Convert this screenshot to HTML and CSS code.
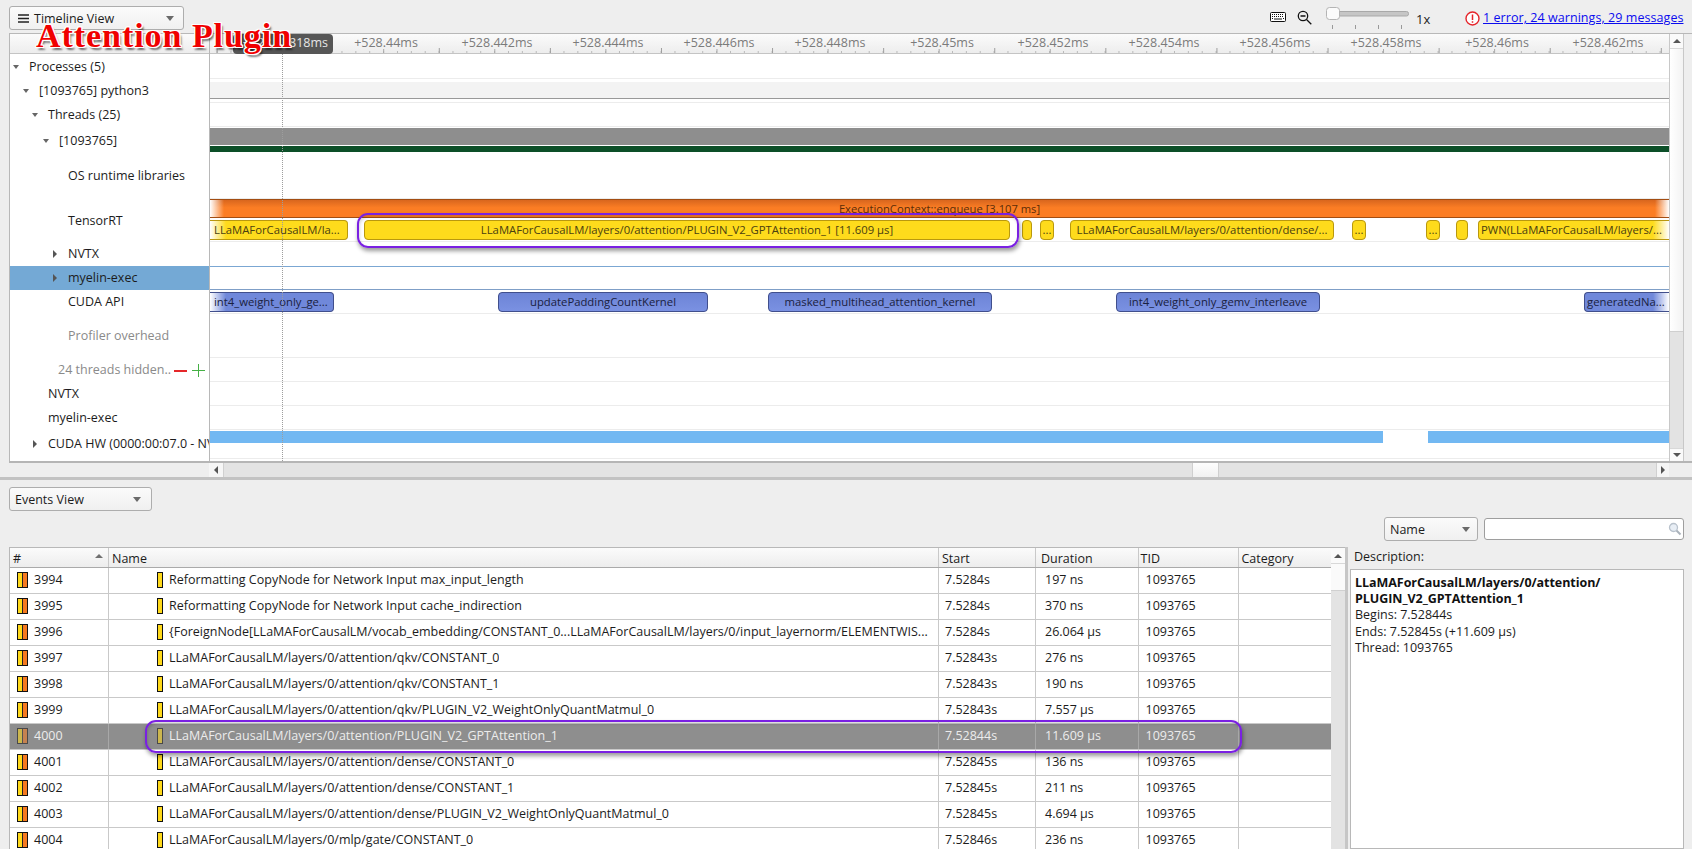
FILE: index.html
```html
<!DOCTYPE html>
<html lang="en">
<head>
<meta charset="utf-8">
<title>Timeline View</title>
<link rel="stylesheet" href="styles.css">
</head>
<body>
<div class="app">
  <header class="toolbar">
    <div class="combo combo-timeline">
      <svg class="menu-ico" width="11" height="9" viewBox="0 0 11 9"><path d="M0 1h11M0 4.500h11M0 8h11" stroke="#222" stroke-width="1.300"/></svg>
      <span class="combo-text">Timeline View</span>
      <i class="caret"></i>
    </div>
    <div class="tools">
      <svg class="ico-kbd" width="16" height="10" viewBox="0 0 16 10"><rect x=".5" y=".5" width="15" height="9" rx="1" fill="#fff" stroke="#111"/><path d="M2 2.500h12M2 4.500h12" stroke="#111" stroke-dasharray="1 1"/><path d="M2 6.500h1M4 7h8M13 6.500h1" stroke="#111"/></svg>
      <svg class="ico-zoom" width="15" height="15" viewBox="0 0 15 15"><circle cx="6" cy="6" r="4.700" fill="none" stroke="#111" stroke-width="1.300"/><path d="M3.500 6h5M9.500 9.500l4.800 4.800" stroke="#111" stroke-width="1.300"/></svg>
      <svg class="slider" width="84" height="33" viewBox="0 0 84 33"><rect x=".5" y="11.500" width="82" height="4.500" rx="2" fill="#c6c6c6" stroke="#a9a9a9"/><path d="M6.500 25v4M29.500 25v4M52.500 25v4M75.500 25v4" stroke="#999"/><rect x=".5" y="7.500" width="13" height="12" rx="3" fill="#fbfbfb" stroke="#b4b4b4"/></svg>
      <span class="speed">1x</span>
      <svg class="ico-err" width="15" height="15" viewBox="0 0 15 15"><circle cx="7.500" cy="7.500" r="6.500" fill="#fff" stroke="#e5242a" stroke-width="1.400"/><path d="M7.500 3.500v5.500M7.500 10.300v1.500" stroke="#e5242a" stroke-width="1.500"/></svg>
      <a class="msg-link" href="#">1 error, 24 warnings, 29 messages</a>
    </div>
  </header>

  <section class="timeline-panel">
    <div class="tree">
      <div class="tree-head"></div>
      <div class="tr h25 d0"><i class="tri-d"></i>Processes (5)</div>
      <div class="tr h24 d1"><i class="tri-d"></i>[1093765] python3</div>
      <div class="tr h24 d2"><i class="tri-d"></i>Threads (25)</div>
      <div class="tr h26 d3 nudge"><i class="tri-d"></i>[1093765]</div>
      <div class="tr h46 d4">OS runtime libraries</div>
      <div class="tr h43 d4">TensorRT</div>
      <div class="tr h24 d4"><i class="tri-r"></i>NVTX</div>
      <div class="tr h24 d4 selected"><i class="tri-r"></i>myelin-exec</div>
      <div class="tr h24 d4">CUDA API</div>
      <div class="tr h44 d4 muted">Profiler overhead</div>
      <div class="tr h24 d3b muted"><span class="hidden-label">24 threads hidden..</span><span class="minus"></span><span class="plus"></span></div>
      <div class="tr h24 d2">NVTX</div>
      <div class="tr h24 d2">myelin-exec</div>
      <div class="tr h28 d2"><i class="tri-r"></i>CUDA HW (0000:00:07.0 - NVIDIA)</div>
    </div>
    <div class="tracks">
      <div class="ruler">
        <span class="tick-label" style="left:176px">+528.44ms</span>
        <span class="tick-label" style="left:287px">+528.442ms</span>
        <span class="tick-label" style="left:398px">+528.444ms</span>
        <span class="tick-label" style="left:509px">+528.446ms</span>
        <span class="tick-label" style="left:620px">+528.448ms</span>
        <span class="tick-label" style="left:732px">+528.45ms</span>
        <span class="tick-label" style="left:843px">+528.452ms</span>
        <span class="tick-label" style="left:954px">+528.454ms</span>
        <span class="tick-label" style="left:1065px">+528.456ms</span>
        <span class="tick-label" style="left:1176px">+528.458ms</span>
        <span class="tick-label" style="left:1287px">+528.46ms</span>
        <span class="tick-label" style="left:1398px">+528.462ms</span>
        <span class="cursor-pill">+528.43818ms</span>
      </div>
      <div class="lane h25"></div>
      <div class="lane h24"><div class="band"></div></div>
      <div class="lane h24"></div>
      <div class="lane h26 lane-plain"><div class="gray-bar"></div><div class="green-bar"></div></div>
      <div class="lane h46"></div>
      <div class="lane h43">
        <div class="orange-bar">ExecutionContext::enqueue [3.107 ms]</div>
        <div class="bar y fade-l" style="left:0;width:138px">LLaMAForCausalLM/la...</div>
        <div class="bar y" style="left:154px;width:646px">LLaMAForCausalLM/layers/0/attention/PLUGIN_V2_GPTAttention_1 [11.609 μs]</div>
        <div class="bar y" style="left:812px;width:10px"></div>
        <div class="bar y" style="left:830px;width:14px">...</div>
        <div class="bar y" style="left:860px;width:264px">LLaMAForCausalLM/layers/0/attention/dense/...</div>
        <div class="bar y" style="left:1142px;width:14px">...</div>
        <div class="bar y" style="left:1216px;width:14px">...</div>
        <div class="bar y" style="left:1246px;width:12px"></div>
        <div class="bar y fade-r" style="left:1268px;width:191px">PWN(LLaMAForCausalLM/layers/...</div>
      </div>
      <div class="lane h24 lane-sel-top"></div>
      <div class="lane h24 lane-sel"></div>
      <div class="lane h24">
        <div class="bar b fade-l" style="left:0;width:124px">int4_weight_only_ge...</div>
        <div class="bar b" style="left:288px;width:210px">updatePaddingCountKernel</div>
        <div class="bar b" style="left:558px;width:224px">masked_multihead_attention_kernel</div>
        <div class="bar b" style="left:906px;width:204px">int4_weight_only_gemv_interleave</div>
        <div class="bar b fade-r" style="left:1374px;width:85px">generatedNa...</div>
      </div>
      <div class="lane h44"></div>
      <div class="lane h24"></div>
      <div class="lane h24"></div>
      <div class="lane h24"></div>
      <div class="lane h28"><div class="hw-bar"></div><div class="hw-gap" style="left:1173px;width:45px"></div></div>
      <div class="cursor-line"></div>
    </div>
    <div class="vscroll">
      <div class="sb-btn"><i class="arr-u"></i></div>
      <div class="sb-thumb"></div>
      <div class="sb-track"></div>
      <div class="sb-btn sb-btn-end"><i class="arr-d"></i></div>
    </div>
  </section>

  <div class="hscroll">
    <div class="hs-btn"><i class="arr-l"></i></div>
    <div class="hs-track hs-a"></div>
    <div class="hs-thumb"></div>
    <div class="hs-track"></div>
    <div class="hs-btn hs-btn-end"><i class="arr-r"></i></div>
  </div>
  <div class="splitter"></div>

  <section class="lower">
    <div class="combo combo-events"><span class="combo-text">Events View</span><i class="caret"></i></div>
    <div class="filters">
      <div class="combo combo-name"><span class="combo-text">Name</span><i class="caret"></i></div>
      <div class="search">
        <svg width="14" height="14" viewBox="0 0 14 14"><circle cx="5.500" cy="5.500" r="4" fill="#e8eef5" stroke="#b9c2cc" stroke-width="1.300"/><path d="M8.500 8.500l4 4" stroke="#aab2bb" stroke-width="2"/></svg>
      </div>
    </div>
    <div class="events">
      <div class="table">
        <div class="row head">
          <div class="c c0">#<i class="sort"></i></div><div class="c c1">Name</div><div class="c c2">Start</div><div class="c c3">Duration</div><div class="c c4">TID</div><div class="c c5">Category</div>
        </div>
        <div class="row"><div class="c c0"><i class="ico2"></i>3994</div><div class="c c1"><i class="ico1"></i><span class="nm">Reformatting CopyNode for Network Input max_input_length</span></div><div class="c c2">7.5284s</div><div class="c c3">197 ns</div><div class="c c4">1093765</div><div class="c c5"></div></div>
        <div class="row"><div class="c c0"><i class="ico2"></i>3995</div><div class="c c1"><i class="ico1"></i><span class="nm">Reformatting CopyNode for Network Input cache_indirection</span></div><div class="c c2">7.5284s</div><div class="c c3">370 ns</div><div class="c c4">1093765</div><div class="c c5"></div></div>
        <div class="row"><div class="c c0"><i class="ico2"></i>3996</div><div class="c c1"><i class="ico1"></i><span class="nm">{ForeignNode[LLaMAForCausalLM/vocab_embedding/CONSTANT_0...LLaMAForCausalLM/layers/0/input_layernorm/ELEMENTWIS...</span></div><div class="c c2">7.5284s</div><div class="c c3">26.064 μs</div><div class="c c4">1093765</div><div class="c c5"></div></div>
        <div class="row"><div class="c c0"><i class="ico2"></i>3997</div><div class="c c1"><i class="ico1"></i><span class="nm">LLaMAForCausalLM/layers/0/attention/qkv/CONSTANT_0</span></div><div class="c c2">7.52843s</div><div class="c c3">276 ns</div><div class="c c4">1093765</div><div class="c c5"></div></div>
        <div class="row"><div class="c c0"><i class="ico2"></i>3998</div><div class="c c1"><i class="ico1"></i><span class="nm">LLaMAForCausalLM/layers/0/attention/qkv/CONSTANT_1</span></div><div class="c c2">7.52843s</div><div class="c c3">190 ns</div><div class="c c4">1093765</div><div class="c c5"></div></div>
        <div class="row"><div class="c c0"><i class="ico2"></i>3999</div><div class="c c1"><i class="ico1"></i><span class="nm">LLaMAForCausalLM/layers/0/attention/qkv/PLUGIN_V2_WeightOnlyQuantMatmul_0</span></div><div class="c c2">7.52843s</div><div class="c c3">7.557 μs</div><div class="c c4">1093765</div><div class="c c5"></div></div>
        <div class="row sel"><div class="c c0"><i class="ico2"></i>4000</div><div class="c c1"><i class="ico1"></i><span class="nm">LLaMAForCausalLM/layers/0/attention/PLUGIN_V2_GPTAttention_1</span></div><div class="c c2">7.52844s</div><div class="c c3">11.609 μs</div><div class="c c4">1093765</div><div class="c c5"></div></div>
        <div class="row"><div class="c c0"><i class="ico2"></i>4001</div><div class="c c1"><i class="ico1"></i><span class="nm">LLaMAForCausalLM/layers/0/attention/dense/CONSTANT_0</span></div><div class="c c2">7.52845s</div><div class="c c3">136 ns</div><div class="c c4">1093765</div><div class="c c5"></div></div>
        <div class="row"><div class="c c0"><i class="ico2"></i>4002</div><div class="c c1"><i class="ico1"></i><span class="nm">LLaMAForCausalLM/layers/0/attention/dense/CONSTANT_1</span></div><div class="c c2">7.52845s</div><div class="c c3">211 ns</div><div class="c c4">1093765</div><div class="c c5"></div></div>
        <div class="row"><div class="c c0"><i class="ico2"></i>4003</div><div class="c c1"><i class="ico1"></i><span class="nm">LLaMAForCausalLM/layers/0/attention/dense/PLUGIN_V2_WeightOnlyQuantMatmul_0</span></div><div class="c c2">7.52845s</div><div class="c c3">4.694 μs</div><div class="c c4">1093765</div><div class="c c5"></div></div>
        <div class="row"><div class="c c0"><i class="ico2"></i>4004</div><div class="c c1"><i class="ico1"></i><span class="nm">LLaMAForCausalLM/layers/0/mlp/gate/CONSTANT_0</span></div><div class="c c2">7.52846s</div><div class="c c3">236 ns</div><div class="c c4">1093765</div><div class="c c5"></div></div>
      </div>
      <div class="table-scroll">
        <div class="sb-btn sb-btn-t"><i class="arr-u"></i></div>
        <div class="sb-thumb-t"></div>
        <div class="sb-track"></div>
      </div>
      <div class="side">
        <div class="desc-label">Description:</div>
        <div class="desc">
          <b>LLaMAForCausalLM/layers/0/attention/<br>PLUGIN_V2_GPTAttention_1</b><br>
          Begins: 7.52844s<br>
          Ends: 7.52845s (+11.609 μs)<br>
          Thread: 1093765
        </div>
      </div>
    </div>
  </section>

  <div class="callout callout-top"></div>
  <div class="callout callout-row"></div>
  <div class="annotation">Attention Plugin</div>
</div>
</body>
</html>
```

FILE: styles.css
```css
* { box-sizing: border-box; }
html, body { margin: 0; padding: 0; }
body {
  background: #eeeeee;
  color: #1c1c1c;
  font: 12.5px/16px "Open Sans", "Noto Sans", sans-serif;
  overflow: hidden;
}
.app {
  position: relative;
  width: 1692px;
  height: 849px;
  overflow: hidden;
  display: flex;
  flex-direction: column;
}
i { display: block; font-style: normal; }

/* toolbar */
.toolbar {
  height: 33px;
  display: flex;
  align-items: flex-start;
  padding: 6px 8px 0 9px;
  flex: none;
}
.combo {
  display: flex;
  align-items: center;
  height: 24px;
  background: linear-gradient(#fbfbfb, #f0f0f0);
  border: 1px solid #adadad;
  border-radius: 3px;
  flex: none;
}
.combo-timeline { width: 175px; padding: 0 9px 0 8px; }
.menu-ico { margin-right: 5px; }
.combo-text { flex: 1; padding-top: 1px; }
.caret {
  width: 0; height: 0;
  border: 4px solid transparent;
  border-top: 5px solid #6a6a6a;
  border-bottom: 0;
}
.tools {
  margin-left: auto;
  display: flex;
  align-items: flex-start;
  margin-top: -6px;
  height: 33px;
}
.ico-kbd { margin-top: 12px; }
.ico-zoom { margin: 10px 0 0 11px; }
.slider { margin-left: 14px; }
.speed { margin: 11px 0 0 6px; width: 39px; font-size: 13px; }
.ico-err { margin: 11px 0 0 10px; }
.msg-link {
  margin: 10px 0 0 3px;
  width: 201px;
  color: #0b0bee;
  font-size: 12.5px;
  white-space: nowrap;
  letter-spacing: .06px;
}

/* timeline panel */
.timeline-panel {
  margin-left: 9px;
  height: 430px;
  display: flex;
  border-top: 1px solid #b8b8b8;
  border-bottom: 2px solid #b5b5b5;
  flex: none;
  overflow: hidden;
}
.tree {
  width: 201px;
  background: #fff;
  border-left: 1px solid #b8b8b8;
  border-right: 1px solid #b8b8b8;
  flex: none;
  overflow: hidden;
}
.tree-head {
  height: 20px;
  background: linear-gradient(#fbfbfb, #ededed);
  border-bottom: 1px solid #c4c4c4;
}
.tr {
  display: flex;
  align-items: center;
  white-space: nowrap;
  position: relative;
  overflow: hidden;
}
.nudge { padding-top: 2px; }
.h24 { height: 24px; }
.h25 { height: 25px; }
.h26 { height: 26px; }
.h28 { height: 28px; }
.h43 { height: 43px; }
.h44 { height: 44px; }
.h46 { height: 46px; }
.d0 { padding-left: 19px; }
.d1 { padding-left: 29px; }
.d2 { padding-left: 38px; }
.d3 { padding-left: 49px; }
.d3b { padding-left: 48px; }
.d4 { padding-left: 58px; }
.tri-d, .tri-r { position: absolute; width: 0; height: 0; border-style: solid; border-color: transparent; }
.tri-d { margin-left: -16px; border-width: 4px 3.500px 0; border-top-color: #666; }
.tri-r { margin-left: -15px; border-width: 4px 0 4px 4px; border-left-color: #555; }
.selected { background: #74a9d5; }
.muted { color: #8a8a8a; }
.hidden-label { width: 116px; overflow: hidden; flex: none; }
.minus, .plus { position: relative; width: 13px; height: 13px; flex: none; }
.minus { margin-left: 0; }
.plus { margin-left: 5px; }
.minus::before, .plus::before { content: ""; position: absolute; left: 0; right: 0; top: 6px; height: 2px; background: #e5272a; }
.plus::before { height: 1px; background: #45b045; }
.plus::after { content: ""; position: absolute; top: 0; bottom: 0; left: 6px; width: 1px; background: #45b045; }

.tracks {
  width: 1459px;
  background: #fff;
  flex: none;
  position: relative;
  overflow: hidden;
}
.ruler {
  height: 20px;
  position: relative;
  border-bottom: 1px solid #c4c4c4;
  background:
    linear-gradient(90deg, #9d9d9d 1px, transparent 1px) 6.600px 100% / 111.100px 5px repeat-x,
    linear-gradient(90deg, #a8a8a8 1px, transparent 1px) 62.100px 100% / 111.100px 4px repeat-x,
    linear-gradient(90deg, #b8b8b8 1px, transparent 1px) 6.600px 100% / 13.890px 2px repeat-x,
    linear-gradient(#fbfbfb, #ededed);
}
.tick-label {
  position: absolute;
  top: 0;
  transform: translateX(-50%);
  color: #7b7b7b;
  font-size: 12.500px;
  line-height: 17px;
  white-space: nowrap;
}
.cursor-pill {
  position: absolute;
  left: 23px;
  top: 0;
  width: 100px;
  height: 20px;
  padding-right: 5px;
  background: #565656;
  border-radius: 4px;
  color: #e6e6e6;
  text-align: right;
  line-height: 18px;
  white-space: nowrap;
}
.lane {
  position: relative;
  border-bottom: 1px solid #ececec;
}
.band {
  position: absolute;
  left: 0; right: 0;
  top: 3px;
  height: 17px;
  background: #f3f3f3;
  border-bottom: 1px solid #999;
}
.lane-plain { padding-top: 1px; border-bottom: 0; }
.gray-bar { height: 17px; background: #8e8e8e; }
.green-bar { height: 6px; margin-top: 1px; background: #0c4f28; }
.lane-sel-top { border-bottom: 0; }
.lane-sel { border-top: 1px solid #7ba7d3; border-bottom: 1px solid #7f9fc7; }
.orange-bar {
  position: absolute;
  left: 0; right: 0;
  top: 0;
  height: 19px;
  line-height: 18px;
  text-align: center;
  color: #5a2c08;
  border-top: 1px solid #a34d12;
  border-bottom: 1px solid #a34d12;
  font-size: 11.200px;
  background:
    linear-gradient(90deg, #fff, rgba(255,255,255,0) 14px, rgba(255,255,255,0) calc(100% - 14px), #fff),
    linear-gradient(#d8661e, #fb7d24 45%);
}
.bar {
  position: absolute;
  overflow: hidden;
  white-space: nowrap;
  text-align: center;
  border-radius: 4px;
  height: 20px;
  line-height: 18px;
  font-size: 11.300px;
  padding: 0 1px;
}
.y { top: 21px; background-color: #fedb1c; border: 1px solid #b9980e; color: #4a4010; }
.b { top: 2px; background-color: #7088da; background-image: linear-gradient(#6d84d6, #7a91e2); border: 1px solid #414f8c; color: #1a2140; }
.fade-l {
  text-align: left;
  padding-left: 4px;
  border-left: 0;
  border-radius: 0 4px 4px 0;
  background-image: linear-gradient(90deg, #fff, rgba(255,255,255,0) 16px);
}
.fade-r {
  text-align: left;
  padding-left: 2px;
  border-right: 0;
  border-radius: 4px 0 0 4px;
  background-image: linear-gradient(270deg, #fff, rgba(255,255,255,0) 16px);
}
.hw-bar { height: 12px; margin-top: 1px; background: #72b8f2; }
.hw-gap { position: absolute; top: 0; height: 14px; background: #fff; }
.cursor-line {
  position: absolute;
  left: 72px;
  top: 20px;
  bottom: 0;
  border-left: 1px dotted #9d9d9d;
}

/* scrollbars */
.vscroll {
  width: 15px;
  flex: none;
  display: flex;
  flex-direction: column;
  background: #e3e3e3;
  border-left: 1px solid #c8c8c8;
  border-right: 1px solid #c8c8c8;
}
.sb-btn {
  height: 15px;
  flex: none;
  background: #fafafa;
  display: flex;
  align-items: center;
  justify-content: center;
  border-bottom: 1px solid #d8d8d8;
}
.sb-btn-end { border-bottom: 0; border-top: 1px solid #d8d8d8; height: 13px; }
.sb-thumb { height: 283px; background: linear-gradient(90deg, #fff, #f3f3f3); border-bottom: 1px solid #cfcfcf; flex: none; }
.sb-track { flex: 1; background: #e3e3e3; }
.arr-u, .arr-d, .arr-l, .arr-r { width: 0; height: 0; border: 4px solid transparent; }
.arr-u { border-top: 0; border-bottom: 4px solid #555; }
.arr-d { border-bottom: 0; border-top: 4px solid #555; }
.arr-l { border-left: 0; border-right: 4px solid #555; }
.arr-r { border-right: 0; border-left: 4px solid #555; }
.hscroll {
  margin-left: 209px;
  width: 1460px;
  height: 14px;
  display: flex;
  flex: none;
  background: #e3e3e3;
}
.hs-btn {
  width: 15px;
  flex: none;
  background: #f6f6f6;
  display: flex;
  align-items: center;
  justify-content: center;
  border-right: 1px solid #d0d0d0;
}
.hs-btn-end { width: 13px; border-right: 0; border-left: 1px solid #d0d0d0; }
.hs-track { flex: 1; }
.hs-a { flex: none; width: 968px; }
.hs-thumb { width: 27px; flex: none; background: linear-gradient(#fdfdfd, #f1f1f1); border: 1px solid #cfcfcf; border-width: 0 1px; }
.splitter { height: 3px; background: #c2c2c2; flex: none; }

/* lower */
.lower {
  flex: 1;
  min-height: 0;
  padding: 7px 8px 0 9px;
  display: flex;
  flex-direction: column;
}
.combo-events { width: 143px; padding: 0 10px 0 5px; }
.filters {
  display: flex;
  justify-content: flex-end;
  align-items: center;
  gap: 6px;
  margin-top: 6px;
  height: 24px;
  flex: none;
}
.combo-name { width: 94px; padding: 0 7px 0 5px; }
.search {
  width: 200px;
  height: 22px;
  background: #fff;
  border: 1px solid #9e9e9e;
  border-radius: 3px;
  display: flex;
  align-items: center;
  justify-content: flex-end;
  padding-right: 1px;
}
.events {
  display: flex;
  margin-top: 6px;
  flex: 1;
  min-height: 0;
}
.table {
  width: 1322px;
  flex: none;
  background: #fff;
  border-left: 1px solid #b8b8b8;
  border-top: 1px solid #b8b8b8;
  overflow: hidden;
}
.row {
  display: grid;
  grid-template-columns: 99px 830px 97px 102.500px 100px 92.500px;
  height: 26px;
  border-bottom: 1px solid #c9c9c9;
}
.c {
  display: flex;
  align-items: center;
  padding-left: 7px;
  padding-bottom: 2px;
  border-right: 1px solid #c9c9c9;
  white-space: nowrap;
  overflow: hidden;
  position: relative;
}
.c0 { padding-left: 7px; }
.c1 { padding-left: 48px; }
.c2 { padding-left: 6px; }
.c3 { padding-left: 9px; }
.c5 { border-right: 0; }
.head {
  height: 20px;
  background: linear-gradient(#fbfbfb, #ededed);
  border-bottom: 1px solid #aaa;
}
.head .c { padding: 2px 0 0 3px; }
.head .c3 { padding-left: 5px; }
.head .c4 { padding-left: 2px; }
.sort {
  position: absolute;
  right: 5px;
  top: 6px;
  width: 0; height: 0;
  border: 4px solid transparent;
  border-top: 0;
  border-bottom: 4px solid #707070;
}
.ico2 {
  width: 11px;
  height: 16px;
  flex: none;
  margin-right: 6px;
  border: 1px solid #111;
  background: linear-gradient(90deg, #ffd91a 0 4px, #222 4px 5px, #f5791f 5px);
}
.ico1 {
  width: 6px;
  height: 16px;
  flex: none;
  margin-right: 6px;
  border: 1px solid #111;
  background: #ffd91a;
}
.nm { overflow: hidden; }
.sel { background: #8e8e8e; color: #ececec; }
.sel .ico2, .sel .ico1 { opacity: .55; }
.sel .c { border-right-color: #a8a8a8; }
.table-scroll {
  width: 14px;
  flex: none;
  display: flex;
  flex-direction: column;
  background: #e3e3e3;
  border-top: 1px solid #b8b8b8;
}
.sb-btn-t { height: 16px; }
.sb-thumb-t { height: 27px; background: #fafafa; flex: none; border-bottom: 1px solid #d0d0d0; }
.side {
  margin-left: 5px;
  width: 334px;
  flex: none;
  display: flex;
  flex-direction: column;
  position: relative;
}
.side::before {
  content: "";
  position: absolute;
  left: -5px;
  width: 3px;
  top: 0;
  bottom: 0;
  background: #c6c6c6;
}
.desc-label { height: 22px; line-height: 19px; padding-left: 4px; }
.desc {
  flex: 1;
  background: #fff;
  border: 1px solid #b8b8b8;
  padding: 5px 4px;
  line-height: 16.200px;
}
.desc b { font-weight: 700; color: #111; letter-spacing: -.05px; }

/* annotations */
.callout {
  position: absolute;
  border: 2px solid #7a20e2;
  border-radius: 11px;
  box-shadow: 1px 3px 4px rgba(0,0,0,.4), inset 1px 2px 3px rgba(0,0,0,.15);
  pointer-events: none;
}
.callout-top { left: 357px; top: 213px; width: 662px; height: 35px; }
.callout-row { left: 145px; top: 720px; width: 1097px; height: 33px; }
.annotation {
  position: absolute;
  left: 36px;
  top: 18px;
  font: 700 34px/36px "Liberation Serif", serif;
  color: #f00000;
  white-space: nowrap;
  letter-spacing: .95px;
  text-shadow:
    -1px -1px 0 #fff, 1px -1px 0 #fff, -1px 1px 0 #fff, 1px 1px 0 #fff,
    0 -1px 0 #fff, 0 1px 0 #fff, -1px 0 0 #fff, 1px 0 0 #fff,
    2px 3px 2px rgba(0,0,0,.55);
}
```
